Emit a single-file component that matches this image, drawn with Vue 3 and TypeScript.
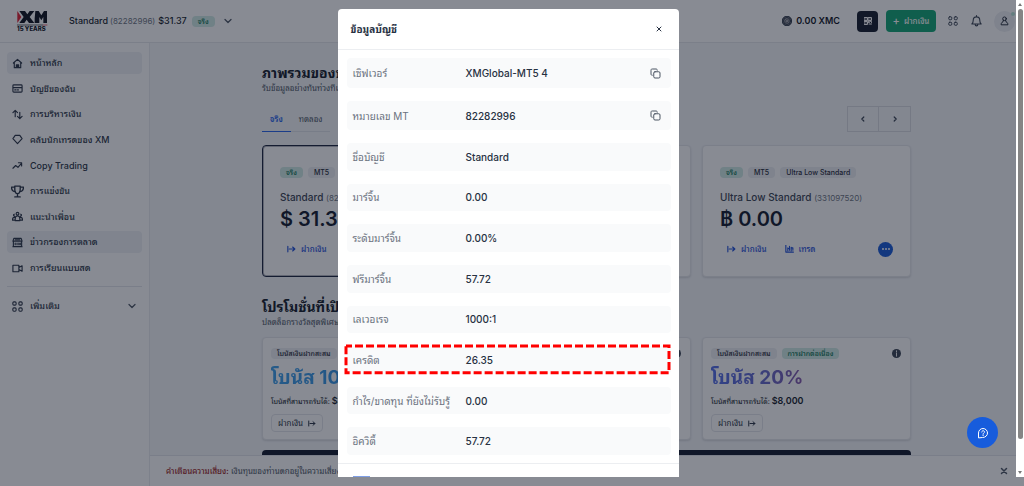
<script setup lang="ts">
interface NavItem { label: string; icon: string; active?: boolean }
interface Detail { label: string; value: string; copy?: boolean; marked?: boolean }

const nav: NavItem[] = [
  { label: 'หน้าหลัก', icon: 'home', active: true },
  { label: 'บัญชีของฉัน', icon: 'card' },
  { label: 'การบริหารเงิน', icon: 'arrows' },
  { label: 'คลับนักเทรดของ XM', icon: 'gem' },
  { label: 'Copy Trading', icon: 'trend' },
  { label: 'การแข่งขัน', icon: 'cup' },
  { label: 'แนะนำเพื่อน', icon: 'people' },
  { label: 'ข่าวกรองการตลาด', icon: 'bank', active: true },
  { label: 'การเรียนแบบสด', icon: 'video' },
]

const icons: Record<string, string> = {
  home: 'M3 11 12 3l9 8M5 9.5V21h14V9.5M9.5 21v-6h5v6M12 15v6',
  card: 'M4 4h16a2 2 0 0 1 2 2v12a2 2 0 0 1-2 2H4a2 2 0 0 1-2-2V6a2 2 0 0 1 2-2zM2 10h20M6 15h3M12 15h2',
  arrows: 'M7 17V3M2 8l5-5 5 5M17 7v14M12 16l5 5 5-5',
  gem: 'M7 3h10l5 7-10 11L2 10z',
  trend: 'M2 18l6-6 5 4 8-9M14 6h7v7',
  cup: 'M7 2h10v6c0 5-2 8-5 8s-5-3-5-8zM7 4H1c0 5 2 8 7 8M17 4h6c0 5-2 8-7 8M12 16v6M7 22h10',
  people: 'M12 3a3 3 0 1 1 0 6 3 3 0 0 1 0-6zM7 21v-4c0-4 2-6 5-6s5 2 5 6v4zM5 7a2 2 0 1 0 1 4M19 7a2 2 0 1 1-1 4M7 14c-4-1-6 1-6 6h6M17 14c4-1 6 1 6 6h-6',
  bank: 'M4 3h16l2 6H2zM3 9v12h18V9M2 21h20M7 13v4M11 13v4M15 13v4M18 13v4M7 6h10',
  video: 'M2 5h13v14H2zM15 10l7-4v12l-7-4',
}

const details: Detail[] = [
  { label: 'เซิฟเวอร์', value: 'XMGlobal-MT5 4', copy: true },
  { label: 'หมายเลข MT', value: '82282996', copy: true },
  { label: 'ชื่อบัญชี', value: 'Standard' },
  { label: 'มาร์จิ้น', value: '0.00' },
  { label: 'ระดับมาร์จิ้น', value: '0.00%' },
  { label: 'ฟรีมาร์จิ้น', value: '57.72' },
  { label: 'เลเวอเรจ', value: '1000:1' },
  { label: 'เครดิต', value: '26.35', marked: true },
  { label: 'กำไร/ขาดทุน ที่ยังไม่รับรู้', value: '0.00' },
  { label: 'อิควิตี้', value: '57.72' },
]
</script>

<template>
  <div class="app">
    <header class="topbar">
      <svg class="logo" viewBox="0 0 90 64" role="img" aria-label="XM 15 YEARS">
        <path d="M1 2 13 20 1 38z" fill="#e11d2e" />
        <path d="M7 2H24L31 12 38 2H52L38 20 52 38H36L29 28 22 38H7L20 20zM55 2H65L73 15 81 2H90V38H79V20L73 30 67 20V38H53V24z" fill="#0b0f1a" />
        <path d="M1 44H77" stroke="#0b0f1a" stroke-width="2" />
        <path d="M79 44H90" stroke="#e11d2e" stroke-width="2" />
        <text x="0" y="63" class="logo-text">15 YEARS</text>
      </svg>
      <button class="account" type="button">
        <b>Standard</b><small>(82282996)</small><b>$31.37</b>
        <span class="tag green">จริง</span>
        <svg class="chev" viewBox="0 0 10 10"><path d="M2 3.5 5 6.5 8 3.5" /></svg>
      </button>
      <div class="tools">
        <svg class="coin" viewBox="0 0 10 10"><circle cx="5" cy="5" r="4.8" fill="#6b6f78" /><circle cx="5" cy="5" r="3.4" fill="#9a9da5" /><path d="M3 6.5c0-3 2-3.500 4-3.500M4 7c2 0 3-1 3-2.500" stroke="#555963" fill="none" /></svg>
        <b class="xmc">0.00 XMC</b>
        <button class="qr" type="button" aria-label="QR">
          <svg viewBox="0 0 16 16"><path d="M1 1h6v6H1zM9 1h6v6H9zM1 9h6v6H1z" /><path d="M3.500 4h1M11.500 4h1M3.500 12h1M9 9h2v2H9M13 9h2v2M10 14h2M14 13v2" /></svg>
        </button>
        <button class="deposit" type="button"><span class="plus">+</span>ฝากเงิน</button>
        <button class="plain apps" type="button" aria-label="แอป">
          <svg viewBox="0 0 20 20"><rect x="1.500" y="1.500" width="6" height="6" rx="2" /><rect x="12.500" y="1.500" width="6" height="6" rx="2" /><rect x="1.500" y="12.500" width="6" height="6" rx="2" /><rect x="12.500" y="12.500" width="6" height="6" rx="2" /></svg>
        </button>
        <button class="plain bell" type="button" aria-label="การแจ้งเตือน">
          <svg viewBox="0 0 20 22"><path d="M1.500 16.500c2-2 2.500-4 2.500-7a6 6 0 0 1 12 0c0 3 .5 5 2.500 7zM7.500 17c0 4 5 4 5 0M10 3.500V1" /></svg>
        </button>
        <button class="avatar" type="button" aria-label="โปรไฟล์">
          <svg viewBox="0 0 20 22"><circle cx="10" cy="6" r="4" /><path d="M7.500 9.500 6.500 13c-3 1-4 3-4 6.500h15c0-3.500-1-5.500-4-6.500l-1-3.500" /></svg>
          <i></i>
        </button>
      </div>
    </header>

    <div class="body">
      <aside class="side">
        <nav>
          <a v-for="n in nav" :key="n.label" href="#" :class="{ active: n.active }">
            <svg viewBox="0 0 24 24"><path :d="icons[n.icon]" /></svg>{{ n.label }}
          </a>
        </nav>
        <button class="more" type="button">
          <svg class="dots" viewBox="0 0 20 20"><rect x="1.500" y="1.500" width="6" height="6" rx="2" /><rect x="12.500" y="1.500" width="6" height="6" rx="2" /><rect x="1.500" y="12.500" width="6" height="6" rx="2" /><rect x="12.500" y="12.500" width="6" height="6" rx="2" /></svg>
          <span>เพิ่มเติม</span>
          <svg class="chev" viewBox="0 0 10 10"><path d="M2 3.500 5 6.500 8 3.500" /></svg>
        </button>
      </aside>

      <div class="content">
        <main>
          <h1>ภาพรวมของบัญชี</h1>
          <p class="sub">รับข้อมูลอย่างทันท่วงทีและ</p>
          <div class="tabrow">
            <div class="tabs">
              <button type="button" class="on">จริง</button><button type="button">ทดลอง</button>
            </div>
            <div class="pager">
              <button type="button" aria-label="ก่อนหน้า"><svg viewBox="0 0 10 10"><path d="M6 2.500 3.500 5 6 7.500" /></svg></button>
              <button type="button" aria-label="ถัดไป"><svg viewBox="0 0 10 10"><path d="M4 2.500 6.500 5 4 7.500" /></svg></button>
            </div>
          </div>

          <section class="cards">
            <article class="acct selected">
              <div class="tags"><span class="tag green">จริง</span><span class="tag">MT5</span></div>
              <div class="name">Standard <small>(82282996)</small></div>
              <div class="amount">$ 31.37</div>
              <div class="actions">
                <a href="#"><svg viewBox="0 0 16 12"><path d="M1.500 1v10M4 6h10M10 2.500 14 6l-4 3.500" /></svg>ฝากเงิน</a>
              </div>
            </article>
            <article class="acct"></article>
            <article class="acct">
              <div class="tags"><span class="tag green">จริง</span><span class="tag">MT5</span><span class="tag">Ultra Low Standard</span></div>
              <div class="name">Ultra Low Standard <small>(331097520)</small></div>
              <div class="amount">฿ 0.00</div>
              <div class="actions">
                <a href="#"><svg viewBox="0 0 16 12"><path d="M1.500 1v10M4 6h10M10 2.500 14 6l-4 3.500" /></svg>ฝากเงิน</a>
                <a href="#"><svg viewBox="0 0 16 14"><path d="M1.500 0v12.500H15M5 5v5M5 6h3M8 2v7M11 4v6M11 5h3v4" /></svg>เทรด</a>
                <button type="button" class="round" aria-label="เพิ่มเติม"><i></i><i></i><i></i></button>
              </div>
            </article>
          </section>

          <h1 class="second">โปรโมชั่นที่เปิดให้</h1>
          <p class="sub">ปลดล็อกรางวัลสุดพิเศษได้</p>
          <section class="cards promos">
            <article class="promo">
              <div class="tags"><span class="tag">โบนัสเงินฝากสะสม</span></div>
              <h2 class="blue">โบนัส 100%</h2>
              <p>โบนัสที่สามารถรับได้: <b>$30</b></p>
              <button type="button">ฝากเงิน<svg viewBox="0 0 16 12"><path d="M1.500 1v10M4 6h10M10 2.500 14 6l-4 3.500" /></svg></button>
            </article>
            <article class="promo"><svg class="info" viewBox="0 0 10 10"><circle cx="5" cy="5" r="5" /><path d="M5 4.500V8M5 2v1.200" /></svg></article>
            <article class="promo">
              <svg class="info" viewBox="0 0 10 10"><circle cx="5" cy="5" r="5" /><path d="M5 4.500V8M5 2v1.200" /></svg>
              <div class="tags"><span class="tag">โบนัสเงินฝากสะสม</span><span class="tag green">การฝากต่อเนื่อง</span></div>
              <h2 class="violet">โบนัส 20%</h2>
              <p>โบนัสที่สามารถรับได้: <b>$8,000</b></p>
              <button type="button">ฝากเงิน<svg viewBox="0 0 16 12"><path d="M1.500 1v10M4 6h10M10 2.500 14 6l-4 3.500" /></svg></button>
            </article>
          </section>
          <div class="banner"></div>
        </main>
        <footer class="risk">
          <p><b>คำเตือนความเสี่ยง:</b> เงินทุนของท่านตกอยู่ในความเสี่ยง ผลิตภัณฑ์</p>
          <button type="button" aria-label="ปิด"><svg viewBox="0 0 10 10"><path d="M2.500 2.500l5 5M7.500 2.500l-5 5" /></svg></button>
        </footer>
      </div>
    </div>

    <div class="overlay">
      <div class="dialog" role="dialog" aria-labelledby="dlg-title">
        <div class="dlg-head">
          <h3 id="dlg-title">ข้อมูลบัญชี</h3>
          <button type="button" aria-label="ปิด"><svg viewBox="0 0 10 10"><path d="M3 3l4 4M7 3 3 7" /></svg></button>
        </div>
        <dl>
          <div v-for="d in details" :key="d.label" class="row">
            <dt>{{ d.label }}</dt>
            <dd>{{ d.value }}</dd>
            <button v-if="d.copy" type="button" aria-label="คัดลอก">
              <svg viewBox="0 0 22 22"><rect x="7.500" y="7.500" width="12.500" height="12.500" rx="2.500" /><path d="M4.500 14.500C2.500 14.500 2 13.500 2 12V4.500C2 2.500 3 2 4.500 2H12c1.500 0 2.500.5 2.500 2.500" /></svg>
            </button>
            <svg v-if="d.marked" class="mark"><rect width="100%" height="100%" /></svg>
          </div>
        </dl>
        <div class="dlg-foot"><button type="button" aria-label="ตกลง"></button></div>
      </div>
    </div>

    <div class="scroll"><i class="up"></i><span></span><i class="down"></i></div>
    <button class="chat" type="button" aria-label="ช่วยเหลือ">
      <svg viewBox="0 0 24 24"><path d="M3 21V12a9 9 0 1 1 9 9z" /><path d="M9.500 10c0-3.500 5.500-3.500 5.500 0 0 2-2.800 2-2.800 4M12.200 16v1.200" /></svg>
    </button>
  </div>
</template>

<style>
body { margin: 0; overflow: hidden; }
</style>

<style scoped>
* { box-sizing: border-box; }
.app { position: relative; height: 100vh; overflow: hidden; display: flex; flex-direction: column; background: #fff; color: #273142; font: 9px/12px Inter, "Noto Sans Thai Looped", Waree, Loma, "Noto Sans", "Liberation Sans", sans-serif; }
button { font: inherit; color: inherit; background: none; border: 0; padding: 0; display: flex; align-items: center; }
a { color: inherit; text-decoration: none; }
h1, h2, h3, p, dl, dd { margin: 0; }
svg { flex: none; fill: none; stroke: currentColor; stroke-width: 2; stroke-linecap: round; stroke-linejoin: round; }
.topbar { flex: none; height: 43px; display: flex; align-items: center; padding: 0 9px 0 17px; border-bottom: 1px solid #e5e7eb; }
.logo { width: 30px; height: 22px; stroke: none; overflow: visible; }
.logo-text { font: 800 18px Inter, sans-serif; fill: #0b0f1a; }
.account { margin-left: 22px; }
.account b { font-weight: 500; color: #111827; }
.account small { font-size: 8px; color: #6b7280; margin: 0 3px 0 2px; }
.account .tag { margin: 0 8px 0 5px; }
.chev { width: 10px; height: 10px; stroke-width: 1.300; color: #4b5563; }
.tag { height: 11px; padding: 0 6px; border-radius: 4px; background: #eceef2; font-size: 7px; line-height: 11px; font-weight: 500; color: #1f2937; white-space: nowrap; }
.tag.green { background: #cfeae4; color: #04704f; }
.tools { margin-left: auto; display: flex; align-items: center; }
.coin { width: 10px; height: 10px; stroke-width: 1; }
.xmc { margin: 0 17px 0 4px; font-weight: 600; color: #0b0f1a; }
.qr { width: 21px; height: 21px; justify-content: center; border-radius: 4px; background: #101828; color: #fff; }
.qr svg { width: 8px; height: 8px; }
.deposit { width: 50px; height: 22px; margin: 0 12px 0 8px; justify-content: center; gap: 4px; border-radius: 4px; background: #0ea573; color: #fff; font-size: 8px; font-weight: 500; }
.plus { font-size: 11px; }
.plain { color: #374151; }
.apps svg { width: 10px; height: 10px; }
.bell { margin: 0 12px 0 13px; }
.bell svg { width: 11px; height: 12px; }
.avatar { position: relative; width: 21px; height: 21px; justify-content: center; border-radius: 50%; background: #eceef2; color: #111827; }
.avatar svg { width: 9px; height: 10px; }
.avatar i { position: absolute; right: 0; top: 1px; width: 4px; height: 4px; border-radius: 50%; background: #b7e4d6; }

.body { flex: 1; min-height: 0; display: flex; }
.side { flex: none; width: 150px; padding: 9px 7px; border-right: 1px solid #e9ebef; }
nav { height: 227px; display: flex; flex-direction: column; justify-content: space-between; }
nav a { display: flex; align-items: center; gap: 7px; height: 22px; padding: 0 5px; border-radius: 4px; font-weight: 500; }
nav a.active { background: #eef1f5; }
nav svg { width: 11px; height: 11px; stroke-width: 2.500; }
nav a:nth-child(6) svg { width: 13px; height: 13px; margin: 0 -1px; }
.more { width: 100%; margin-top: 7px; padding: 13px 5px; border-top: 1px solid #e2e5ea; font-weight: 500; }
.more .dots { width: 11px; height: 11px; margin-right: 7px; }
.more .chev { margin-left: auto; }

.content { flex: 1; min-width: 0; display: flex; flex-direction: column; background: #f4f6f9; }
main { flex: 1; min-height: 0; overflow: hidden; padding: 20px 113px 0 112px; }
h1 { font-size: 14px; line-height: 20px; font-weight: 700; white-space: nowrap; color: #111827; }
.sub { font-size: 8px; line-height: 10px; color: #4b5563; }
.tabrow { display: flex; justify-content: space-between; margin-top: 13px; }
.tabs { display: flex; }
.tabs button { height: 26px; padding: 0 8px; border-bottom: 1px solid #dfe2e8; font-size: 8px; color: #4b5563; }
.tabs .on { border-color: #2563eb; color: #2563eb; font-weight: 600; }
.pager { display: flex; }
.pager button { width: 32px; height: 26px; justify-content: center; border: 1px solid #d8dbe1; color: #374151; }
.pager button + button { border-left: 0; }
.pager svg { width: 8px; height: 8px; stroke-width: 1.500; }
.cards { display: grid; grid-template-columns: repeat(3, minmax(0, 1fr)); gap: 11px; margin-top: 13px; }
article { border: 1px solid #e5e7eb; border-radius: 4px; background: #fff; box-shadow: 0 1px 2px #11182722; overflow: hidden; }
.acct { height: 132px; padding: 21px 17px 0; }
.selected { border-color: #17203a; box-shadow: 0 0 0 1px #17203a55 inset; }
.tags { display: flex; gap: 5px; }
.name { margin-top: 11px; font-size: 10px; line-height: 16px; font-weight: 500; color: #374151; white-space: nowrap; }
.name small { font-size: 8px; font-weight: 400; color: #6b7280; }
.amount { font-size: 20px; line-height: 26px; font-weight: 600; color: #0f172a; white-space: nowrap; }
.actions { display: flex; align-items: center; gap: 18px; height: 16px; margin-top: 9px; padding-left: 7px; font-size: 8px; font-weight: 500; color: #1d4ed8; }
.actions a { display: flex; align-items: center; gap: 5px; }
.actions svg { width: 9px; height: 8px; }
.round { width: 15px; height: 15px; margin-left: auto; justify-content: center; gap: 1px; border-radius: 50%; background: #1558d6; }
.round i { width: 2px; height: 2px; border-radius: 50%; background: #fff; }
.second { margin-top: 20px; }
.promos { margin-top: 10px; }
.promo { position: relative; height: 103px; padding: 10px 8px 0; }
.promo h2 { width: fit-content; margin-top: 5px; font-size: 19px; line-height: 28px; font-weight: 700; white-space: nowrap; color: transparent; background-clip: text; }
.blue { background-image: linear-gradient(90deg, #3b9eea, #2f8fe0); }
.violet { background-image: linear-gradient(90deg, #4f6be8, #6366c9 60%, #8455a8); }
.promo p { margin-top: 3px; font-size: 7px; line-height: 12px; white-space: nowrap; color: #111827; }
.promo p b { font-size: 9px; font-weight: 600; }
.promo button { gap: 5px; height: 18px; margin-top: 6px; padding: 0 6px; border: 1px solid #e2e5ea; border-radius: 4px; font-size: 8px; }
.promo button svg { width: 8px; height: 7px; }
.promo .info { position: absolute; right: 9px; top: 11px; width: 9px; height: 9px; stroke: #fff; stroke-width: 1; }
.info circle { fill: #374151; stroke: none; }
.banner { height: 30px; margin-top: 10px; border-radius: 4px; background: #0f172a; }
.risk { flex: none; height: 31px; display: flex; align-items: center; justify-content: space-between; padding: 0 15px 0 16px; border-top: 1px solid #e2e5ea; background: #fff; font-size: 8px; color: #4b5563; }
.risk b { font-weight: 500; color: #991b1b; }
.risk svg { width: 10px; height: 10px; stroke-width: 1.500; }

.overlay { position: absolute; inset: 0; display: flex; justify-content: center; padding: 9px 8px 9px 0; background: rgba(17, 24, 39, .5); }
.dialog { width: 341px; overflow: hidden; border-radius: 4px 4px 0 0; background: #fff; }
.dlg-head { display: flex; justify-content: space-between; align-items: center; height: 41px; padding: 0 15px 0 13px; border-bottom: 1px solid #eceef1; }
.dlg-head h3 { font-size: 10px; line-height: 14px; font-weight: 700; }
.dlg-head svg { width: 10px; height: 10px; stroke-width: 1; }
dl { display: grid; grid-template-rows: 30px 29px; grid-auto-rows: 1fr; gap: 13px; height: 397px; margin: 8px 8px 8px 9px; }
.row { position: relative; display: flex; align-items: center; padding: 0 10px 0 6px; border-radius: 4px; background: #f9fafb; font-size: 10px; }
dt { width: 113px; color: #6b7280; white-space: nowrap; }
dd { font-weight: 500; }
.row button { margin-left: auto; color: #4b5563; }
.row button svg { width: 11px; height: 11px; }
.row .mark { position: absolute; left: -1px; top: 0; width: calc(100% - 1px); height: calc(100% - 1px); overflow: visible; stroke: #f00; stroke-width: 3; stroke-linecap: butt; stroke-linejoin: miter; stroke-dasharray: 8 3; stroke-dashoffset: 2; }
.dlg-foot { padding: 12px 15px; border-top: 1px solid #eceef1; }
.dlg-foot button { width: 17px; height: 18px; background: #7f9fe6; }

.scroll { position: absolute; right: 0; top: 0; bottom: 9px; width: 8px; display: flex; flex-direction: column; align-items: center; padding: 3px 0; background: #fff; }
.scroll span { width: 5px; height: 430px; margin: 3px 0 auto; border-radius: 3px; background: #858585; }
.scroll i { border: 2px solid transparent; }
.scroll .up { border-top: 0; border-bottom: 3px solid #777; }
.scroll .down { border-bottom: 0; border-top: 3px solid #777; }
.chat { position: absolute; right: 26px; bottom: 38px; width: 31px; height: 31px; justify-content: center; border-radius: 50%; background: #175cdc; color: #fff; }
.chat svg { width: 12px; height: 12px; }
</style>
